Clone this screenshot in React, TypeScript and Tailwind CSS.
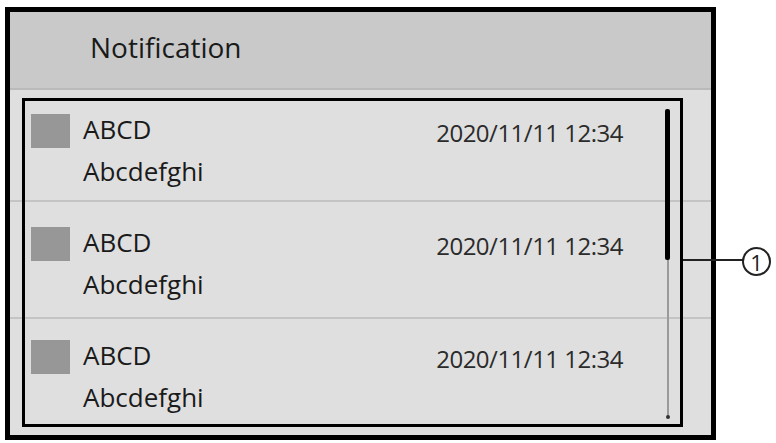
const rows = [
  { title: 'ABCD', body: 'Abcdefghi', time: '2020/11/11 12:34', box: 'h-[112px] pt-[24px] border-b-2 border-[#c4c4c4]' },
  { title: 'ABCD', body: 'Abcdefghi', time: '2020/11/11 12:34', box: 'h-[117px] pt-[25px] border-b-2 border-[#c4c4c4]' },
  { title: 'ABCD', body: 'Abcdefghi', time: '2020/11/11 12:34', box: 'flex-1 pt-[21px]' },
]

export default function App() {
  return (
    <div className="relative w-[776px] h-[443px] bg-white overflow-hidden pt-[7px] pl-[5px] font-['Open_Sans',sans-serif] text-[#1a1a1a]">
      {/* panel */}
      <div className="relative w-[711px] h-[433px] border-[5px] border-black flex flex-col bg-[#dfdfdf]">
        <div className="h-[78px] shrink-0 bg-[#c9c9c9] border-b-2 border-[#bababa] pl-[80px] pt-[18px]">
          <span className="text-[28px] leading-[34px]">Notification</span>
        </div>

        <div className="flex-1 flex flex-col">
          {rows.map((r, i) => (
            <div key={i} className={`flex items-start pl-[21px] pr-[88px] ${r.box}`}>
              <div className="w-[39px] h-[34px] bg-[#979797] shrink-0" />
              <div className="ml-[13px] flex flex-col">
                <span className="text-[26px] leading-[30px]">{r.title}</span>
                <span className="text-[26px] leading-[30px] mt-[12px]">{r.body}</span>
              </div>
              <span className="ml-auto mt-[4px] text-[24px] leading-[30px] tracking-[-0.5px] text-[#2b2b2b]">{r.time}</span>
            </div>
          ))}
        </div>

        {/* annotation box around the list */}
        <div className="absolute left-[12px] top-[86px] w-[661px] h-[329px] border-[3px] border-black pointer-events-none" />

        {/* scrollbar */}
        <div className="absolute left-[657px] top-[248px] w-[2px] h-[158px] bg-[#9a9a9a]" />
        <div className="absolute left-[656px] top-[403px] w-[4px] h-[4px] rounded-full bg-[#333]" />
        <div className="absolute left-[655px] top-[97px] w-[5px] h-[151px] rounded-[2px] bg-black" />
      </div>

      {/* callout ① */}
      <div className="absolute left-[683px] top-[259px] w-[60px] h-[2px] bg-[#222]" />
      <div className="absolute left-[742px] top-[247px] w-[29px] h-[29px] rounded-full border-2 border-[#222] bg-white flex items-center justify-center">
        <span className="text-[22px] leading-none text-[#222]">1</span>
      </div>
    </div>
  )
}
